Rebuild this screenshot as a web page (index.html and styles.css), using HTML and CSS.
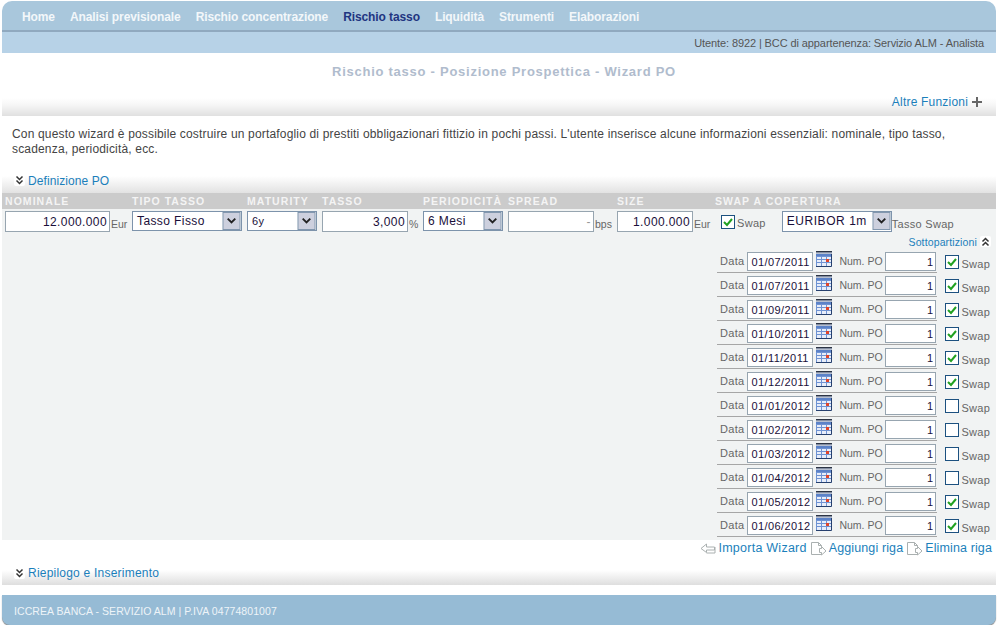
FILE: index.html
```html
<!DOCTYPE html>
<html lang="it">
<head>
<meta charset="utf-8">
<title>Rischio tasso - Wizard PO</title>
<link rel="stylesheet" href="styles.css">
</head>
<body>
<svg class="defs" width="0" height="0">
  <defs>
    <symbol id="cal" viewBox="0 0 16 16">
      <rect x="0" y="0" width="16" height="16" fill="#e8eefa"/>
      <rect x="0" y="0" width="16" height="1" fill="#2c3444"/>
      <path d="M1 1v1.500M3 1v1.500M5 1v1.500M7 1v1.500M9 1v1.500M11 1v1.500M13 1v1.500M15 1v1.500" stroke="#20304e" stroke-width="1"/>
      <rect x="0" y="3" width="16" height="2" fill="#5b82c8"/>
      <path d="M0.500 5v11M5.500 5v11M10.500 5v11M0 5.500h16M0 8.500h16M0 11.500h16" stroke="#6f93d3" stroke-width="1"/>
      <path d="M15.500 3v12.500H0" fill="none" stroke="#26406e" stroke-width="1"/>
      <rect x="10" y="8" width="3" height="3" fill="#e0442a"/>
    </symbol>
    <symbol id="chk" viewBox="0 0 14 14">
      <rect x="0.500" y="0.500" width="13" height="13" fill="#fff" stroke="#1c5180"/>
      <path d="M3 7l3 3 5-6" fill="none" stroke="#21a121" stroke-width="2"/>
    </symbol>
    <symbol id="unchk" viewBox="0 0 14 14">
      <rect x="0.500" y="0.500" width="13" height="13" fill="#fff" stroke="#1c5180"/>
    </symbol>
    <symbol id="arrow" viewBox="0 0 11 11">
      <rect width="11" height="11" rx="2" fill="#fff"/>
      <path d="M2.500 1.500l3 3 3-3M2.500 5.500l3 3 3-3" fill="none" stroke="#333" stroke-width="1.500"/>
    </symbol>
    <symbol id="doc" viewBox="0 0 17 15">
      <path d="M1.500 1.500h7l3 3v9h-10zM8.500 1.500v3h3" fill="#fff" stroke="#aab0b0"/>
      <path d="M9.500 7.500h2v-2l4.500 4.500-4.500 4v-2.500h-2z" fill="#fff" stroke="#aab0b0"/>
    </symbol>
    <symbol id="back" viewBox="0 0 16 11">
      <path d="M6.500 1l-5.500 4.500 5.500 4v-2.500h8v-3h-8z" fill="#fff" stroke="#aab0b0"/>
      <path d="M15 4v6H6.500" fill="none" stroke="#aab0b0"/>
    </symbol>
    <symbol id="sel" viewBox="0 0 19 19">
      <rect x="0.500" y="0.500" width="18" height="18" fill="#cdd0de" stroke="#7d93ab"/>
      <path d="M5.500 7l4 4 4-4" fill="none" stroke="#222" stroke-width="2"/>
    </symbol>
  </defs>
</svg>
<div class="page">
  <nav class="nav">
    <a class="nav-item">Home</a>
    <a class="nav-item">Analisi previsionale</a>
    <a class="nav-item">Rischio concentrazione</a>
    <a class="nav-item active">Rischio tasso</a>
    <a class="nav-item">Liquidità</a>
    <a class="nav-item">Strumenti</a>
    <a class="nav-item">Elaborazioni</a>
  </nav>
  <div class="userbar">Utente: 8922 | BCC di appartenenza: Servizio ALM - Analista</div>
  <div class="titlezone">
    <h1 class="title">Rischio tasso - Posizione Prospettica - Wizard PO</h1>
    <div class="altre"><a class="link">Altre Funzioni</a><span class="plus"></span></div>
  </div>
  <p class="intro">Con questo wizard è possibile costruire un portafoglio di prestiti obbligazionari fittizio in pochi passi. L'utente inserisce alcune informazioni essenziali: nominale, tipo tasso, scadenza, periodicità, ecc.</p>
  <div class="section"><svg class="ic-arrow"><use href="#arrow"/></svg><a class="link">Definizione PO</a></div>
  <div class="form">
    <div class="heads">
      <span>NOMINALE</span><span>TIPO TASSO</span><span>MATURITY</span><span>TASSO</span><span>PERIODICITÀ</span><span>SPREAD</span><span>SIZE</span><span>SWAP A COPERTURA</span>
    </div>
    <div class="fields">
      <div class="cell"><input class="inp w105" value="12.000.000"><span class="unit">Eur</span></div>
      <div class="cell"><div class="select w110"><span>Tasso Fisso</span><svg><use href="#sel"/></svg></div></div>
      <div class="cell"><div class="select w70 small"><span>6y</span><svg><use href="#sel"/></svg></div></div>
      <div class="cell"><input class="inp w86" value="3,000"><span class="unit">%</span></div>
      <div class="cell"><div class="select w80"><span>6 Mesi</span><svg><use href="#sel"/></svg></div></div>
      <div class="cell"><input class="inp w86 dash" value="-"><span class="unit">bps</span></div>
      <div class="cell"><input class="inp w76" value="1.000.000"><span class="unit">Eur</span></div>
      <div class="cell swapcell">
        <svg class="chk"><use href="#chk"/></svg><span class="lab swaplab">Swap</span>
        <div class="select w110 big"><span>EURIBOR 1m</span><svg><use href="#sel"/></svg></div>
        <span class="lab">Tasso Swap</span>
      </div>
    </div>
    <div class="subhead"><a class="link">Sottopartizioni</a><svg class="ic-up"><use href="#arrow"/></svg></div>
    <div class="rows">
      <div class="row"><span class="lab">Data</span><input class="inp date" value="01/07/2011"><svg class="cal"><use href="#cal"/></svg><span class="lab num">Num. PO</span><input class="inp po" value="1"><svg class="chk"><use href="#chk"/></svg><span class="lab swaplab">Swap</span></div>
      <div class="row"><span class="lab">Data</span><input class="inp date" value="01/07/2011"><svg class="cal"><use href="#cal"/></svg><span class="lab num">Num. PO</span><input class="inp po" value="1"><svg class="chk"><use href="#chk"/></svg><span class="lab swaplab">Swap</span></div>
      <div class="row"><span class="lab">Data</span><input class="inp date" value="01/09/2011"><svg class="cal"><use href="#cal"/></svg><span class="lab num">Num. PO</span><input class="inp po" value="1"><svg class="chk"><use href="#chk"/></svg><span class="lab swaplab">Swap</span></div>
      <div class="row"><span class="lab">Data</span><input class="inp date" value="01/10/2011"><svg class="cal"><use href="#cal"/></svg><span class="lab num">Num. PO</span><input class="inp po" value="1"><svg class="chk"><use href="#chk"/></svg><span class="lab swaplab">Swap</span></div>
      <div class="row"><span class="lab">Data</span><input class="inp date" value="01/11/2011"><svg class="cal"><use href="#cal"/></svg><span class="lab num">Num. PO</span><input class="inp po" value="1"><svg class="chk"><use href="#chk"/></svg><span class="lab swaplab">Swap</span></div>
      <div class="row"><span class="lab">Data</span><input class="inp date" value="01/12/2011"><svg class="cal"><use href="#cal"/></svg><span class="lab num">Num. PO</span><input class="inp po" value="1"><svg class="chk"><use href="#chk"/></svg><span class="lab swaplab">Swap</span></div>
      <div class="row"><span class="lab">Data</span><input class="inp date" value="01/01/2012"><svg class="cal"><use href="#cal"/></svg><span class="lab num">Num. PO</span><input class="inp po" value="1"><svg class="chk"><use href="#unchk"/></svg><span class="lab swaplab">Swap</span></div>
      <div class="row"><span class="lab">Data</span><input class="inp date" value="01/02/2012"><svg class="cal"><use href="#cal"/></svg><span class="lab num">Num. PO</span><input class="inp po" value="1"><svg class="chk"><use href="#unchk"/></svg><span class="lab swaplab">Swap</span></div>
      <div class="row"><span class="lab">Data</span><input class="inp date" value="01/03/2012"><svg class="cal"><use href="#cal"/></svg><span class="lab num">Num. PO</span><input class="inp po" value="1"><svg class="chk"><use href="#unchk"/></svg><span class="lab swaplab">Swap</span></div>
      <div class="row"><span class="lab">Data</span><input class="inp date" value="01/04/2012"><svg class="cal"><use href="#cal"/></svg><span class="lab num">Num. PO</span><input class="inp po" value="1"><svg class="chk"><use href="#unchk"/></svg><span class="lab swaplab">Swap</span></div>
      <div class="row"><span class="lab">Data</span><input class="inp date" value="01/05/2012"><svg class="cal"><use href="#cal"/></svg><span class="lab num">Num. PO</span><input class="inp po" value="1"><svg class="chk"><use href="#chk"/></svg><span class="lab swaplab">Swap</span></div>
      <div class="row"><span class="lab">Data</span><input class="inp date" value="01/06/2012"><svg class="cal"><use href="#cal"/></svg><span class="lab num">Num. PO</span><input class="inp po" value="1"><svg class="chk"><use href="#chk"/></svg><span class="lab swaplab">Swap</span></div>
    </div>
  </div>
  <div class="actions">
    <svg class="ic-back"><use href="#back"/></svg><a class="link">Importa Wizard</a>
    <svg class="ic-doc"><use href="#doc"/></svg><a class="link">Aggiungi riga</a>
    <svg class="ic-doc"><use href="#doc"/></svg><a class="link">Elimina riga</a>
  </div>
  <div class="section recap"><svg class="ic-arrow"><use href="#arrow"/></svg><a class="link">Riepilogo e Inserimento</a></div>
  <footer class="footer">ICCREA BANCA - SERVIZIO ALM | P.IVA 04774801007</footer>
</div>
</body>
</html>
```
FILE: styles.css
```css
* { box-sizing: border-box; }
html, body { margin: 0; padding: 0; background: #fff; }
body { font-family: "Liberation Sans", Arial, sans-serif; font-size: 12px; color: #333; overflow: hidden; }
.defs { display: block; height: 0; }
.page { width: 994px; height: 625px; margin-left: 2px; display: flex; flex-direction: column; }

.nav { height: 31px; margin-top: 1px; background: #a9c7dc; border-radius: 10px 10px 0 0; border-bottom: 2px solid #90a9bf; display: flex; align-items: center; gap: 15px; padding: 3px 0 0 20px; }
.nav-item { font-size: 12px; font-weight: bold; color: #f3f7fa; letter-spacing: -0.1px; }
.nav-item.active { color: #1f3581; }

.userbar { height: 21px; background: #b7d2e7; color: #555; font-size: 11px; line-height: 22px; text-align: right; padding-right: 12px; letter-spacing: -0.1px; }

.titlezone { height: 63px; background: linear-gradient(#fff 0, #fff 45px, #f6f6f6 52px, #e0e0e0 63px); display: flex; flex-direction: column; }
.title { margin: 11px 0 0; padding-left: 10px; font-size: 13px; font-weight: bold; color: #b0bccd; text-align: center; letter-spacing: 0.74px; line-height: 15px; }
.altre { margin-top: 15px; display: flex; justify-content: flex-end; align-items: center; padding-right: 14px; height: 15px; }
.altre .link { letter-spacing: 0.2px; margin-right: -1px; }
.link { color: #1b7fbb; font-size: 12px; }
.plus { width: 10px; height: 10px; margin-left: 5px; background: linear-gradient(#666,#666) center/10px 2px no-repeat, linear-gradient(#666,#666) center/2px 10px no-repeat; }

.intro { margin: 11px 0 0; padding: 0 30px 0 10px; height: 30px; font-size: 12px; line-height: 15px; color: #444; letter-spacing: 0.17px; }

.section { height: 21px; margin-top: 15px; padding-left: 12px; display: flex; align-items: flex-start; background: linear-gradient(#fff 0, #fff 4px, #e2e2e2 21px); }
.section .link { line-height: 16px; margin-top: 1px; letter-spacing: 0.08px; }
.ic-arrow { width: 11px; height: 11px; margin: 3px 3px 0 0; }

.form { height: 347px; background: #f1f3f3; display: flex; flex-direction: column; }
.heads { height: 16px; background: #cbcbcb; display: grid; grid-template-columns: 127px 115px 75px 101px 85px 109px 98px 1fr; padding-left: 3px; color: #f4f4f4; font-size: 10.500px; font-weight: bold; letter-spacing: 1.05px; line-height: 16px; white-space: nowrap; }
.fields { height: 25px; display: grid; grid-template-columns: 127px 115px 75px 101px 85px 109px 98px 1fr; padding: 2px 0 0 3px; }
.cell { display: flex; align-items: flex-start; }
.unit { font-size: 10.500px; color: #666; margin: 7px 0 0 1px; }
.inp { height: 21px; border: 1px solid #97a5b0; background: #fff; padding: 1px 2px 0; font: 12px "Liberation Sans", Arial, sans-serif; letter-spacing: 0.4px; color: #1a0f3a; text-align: right; }
.w105 { width: 105px; } .w86 { width: 86px; } .w76 { width: 76px; } .w110 { width: 110px; } .w70 { width: 70px; } .w80 { width: 80px; }
.dash { color: #999; }
.select { height: 20px; border: 1px solid #7d93ab; background: #fff; display: flex; justify-content: space-between; font-size: 12px; color: #1a0f3a; letter-spacing: 0.4px; line-height: 19px; padding-left: 4px; }
.select svg { width: 19px; height: 18px; flex: none; }
.select.small { font-size: 11px; }
.select.big { height: 21px; font-size: 12px; margin-left: 16px; line-height: 19px; letter-spacing: 0.55px; }
.swapcell { padding-left: 6px; }
.swapcell .chk { margin-top: 4px; }
.swapcell .lab { margin-top: 6px; }
.swapcell .swaplab { margin-top: 5px; }
.lab { font-size: 11px; color: #666; letter-spacing: 0.3px; line-height: 14px; white-space: nowrap; }
.swaplab { margin-left: 2px; }
.chk { width: 14px; height: 14px; flex: none; }

.subhead { height: 15px; display: flex; justify-content: flex-end; align-items: center; padding-right: 5px; }
.subhead .link { font-size: 10.500px; letter-spacing: 0.13px; }
.ic-up { width: 11px; height: 11px; margin-left: 3px; transform: scaleY(-1); }

.rows { align-self: flex-end; width: 279px; }
.row { height: 24px; width: 220px; display: flex; align-items: flex-start; padding: 3px 0 0 3px; border-bottom: 1px solid #a6a6a6; white-space: nowrap; }
.row > * { flex: none; }
.row .lab { margin-top: 2px; }
.date { width: 66px; height: 19px; margin-left: 3px; text-align: left; padding-left: 3px; font-size: 11px; letter-spacing: 0.4px; }
.cal { width: 16px; height: 16px; margin: -1px 0 0 3px; }
.row .num { width: 46px; margin-left: 7px; font-size: 10.500px; letter-spacing: 0; }
.po { width: 51px; height: 19px; font-size: 11px; }
.row .chk { margin: 3px 0 0 9px; }
.row .swaplab { margin: 5px 0 0 2px; }

.actions { height: 16px; display: flex; justify-content: flex-end; align-items: center; padding-right: 4px; }
.actions .link { font-size: 12.500px; letter-spacing: 0.12px; }
.actions .link:nth-of-type(1) { letter-spacing: 0.25px; }
.ic-back { width: 16px; height: 11px; margin-right: 2px; }
.ic-doc { width: 17px; height: 15px; margin: 0 2px 0 3px; }

.section.recap { margin-top: 10px; height: 19px; background: linear-gradient(#fff 0, #fff 4px, #dedede 19px); }
.section.recap .link { margin-top: -1px; letter-spacing: 0.22px; }
.section.recap .ic-arrow { margin-top: 2px; }
.footer { margin-top: 10px; height: 30px; background: #96bbd5; border-radius: 0 0 8px 8px; color: #eef4f8; font-size: 10.500px; line-height: 33px; padding-left: 12px; letter-spacing: 0.07px; box-shadow: 0 1px 1px #888; }
```
